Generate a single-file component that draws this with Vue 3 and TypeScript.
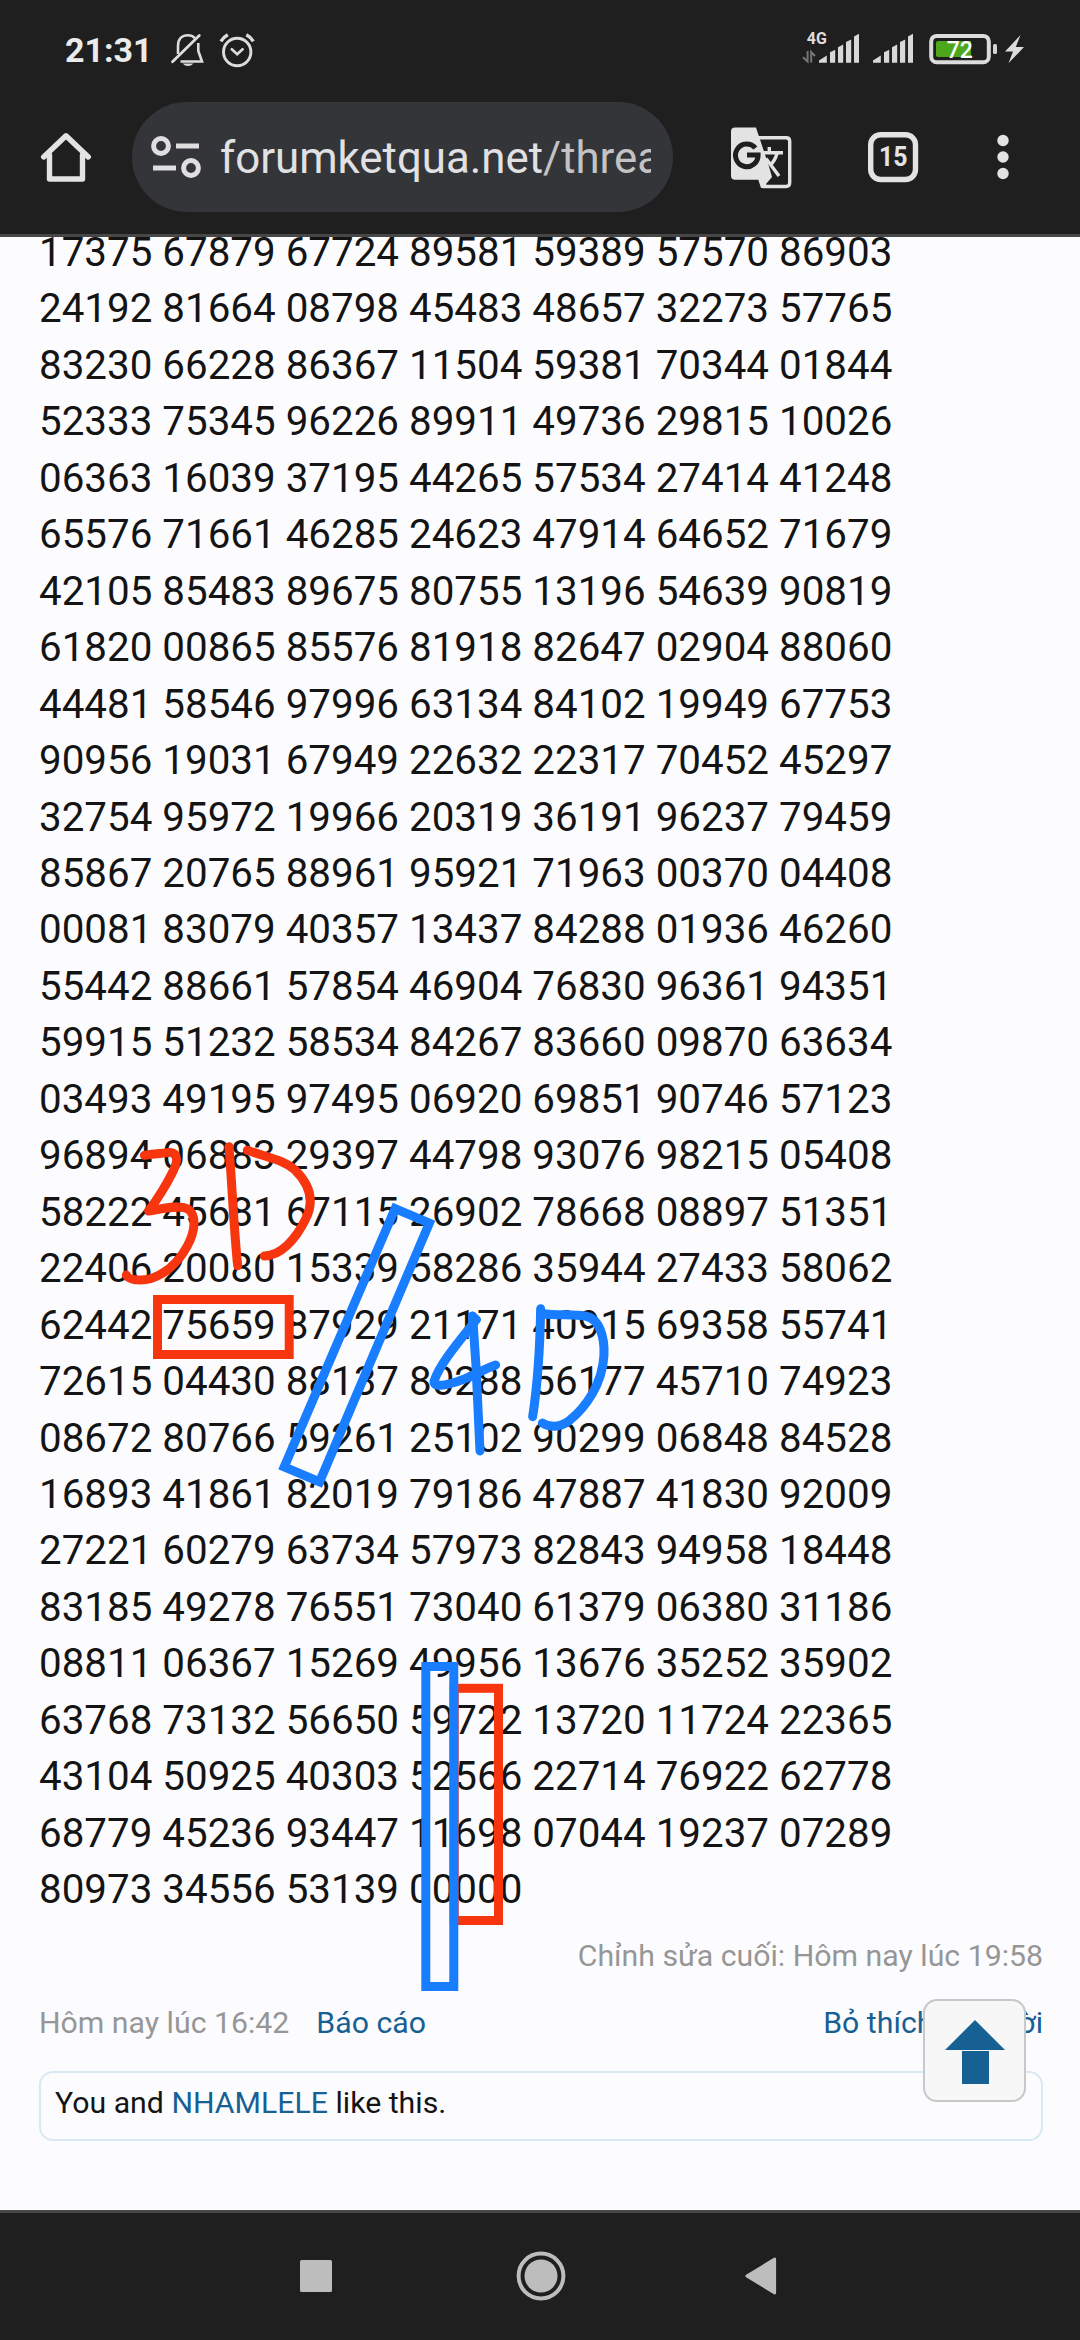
<script setup lang="ts">
const rows: string[] = [
  '17375 67879 67724 89581 59389 57570 86903',
  '24192 81664 08798 45483 48657 32273 57765',
  '83230 66228 86367 11504 59381 70344 01844',
  '52333 75345 96226 89911 49736 29815 10026',
  '06363 16039 37195 44265 57534 27414 41248',
  '65576 71661 46285 24623 47914 64652 71679',
  '42105 85483 89675 80755 13196 54639 90819',
  '61820 00865 85576 81918 82647 02904 88060',
  '44481 58546 97996 63134 84102 19949 67753',
  '90956 19031 67949 22632 22317 70452 45297',
  '32754 95972 19966 20319 36191 96237 79459',
  '85867 20765 88961 95921 71963 00370 04408',
  '00081 83079 40357 13437 84288 01936 46260',
  '55442 88661 57854 46904 76830 96361 94351',
  '59915 51232 58534 84267 83660 09870 63634',
  '03493 49195 97495 06920 69851 90746 57123',
  '96894 06883 29397 44798 93076 98215 05408',
  '58222 45681 67115 26902 78668 08897 51351',
  '22406 20080 15339 58286 35944 27433 58062',
  '62442 75659 87929 21171 40915 69358 55741',
  '72615 04430 88137 80288 56177 45710 74923',
  '08672 80766 59261 25102 90299 06848 84528',
  '16893 41861 82019 79186 47887 41830 92009',
  '27221 60279 63734 57973 82843 94958 18448',
  '83185 49278 76551 73040 61379 06380 31186',
  '08811 06367 15269 49956 13676 35252 35902',
  '63768 73132 56650 59722 13720 11724 22365',
  '43104 50925 40303 52566 22714 76922 62778',
  '68779 45236 93447 11698 07044 19237 07289',
  '80973 34556 53139 00000',
]
const signalOffsets: number[] = [0, 54]
</script>

<template>
  <div class="screen">
    <header class="top">
      <div class="status">
        <span class="clock">21:31</span>
        <svg class="status-left" width="90" height="40" viewBox="168 30 90 40" fill="none" stroke="#dcdcdc">
          <path d="M178 54V46C178 39 182 35.3 188 35.3C191 35.3 193 36.2 194.8 38M198.3 43V51L202 61.5H180.5" stroke-width="2.6" />
          <path d="M172.5 61.7L199.3 35.6" stroke-width="2.8" stroke-linecap="round" />
          <path d="M182.5 63.4H193.5Q191 66 188 66T182.5 63.4Z" fill="#dcdcdc" stroke="none" />
          <circle cx="237.2" cy="52" r="13.7" stroke-width="2.9" />
          <path d="M231.8 49.3L237.2 54.2L242.6 49.3" stroke-width="2.7" stroke-linecap="round" />
          <path d="M220.9 41.3Q223.5 37 227.8 34.7M246.3 34.7Q250.8 37 253.3 41.3" stroke-width="3.4" />
        </svg>
        <svg class="status-right" width="240" height="40" viewBox="800 30 240 40">
          <text x="806.8" y="44" class="net" textLength="20" lengthAdjust="spacingAndGlyphs">4G</text>
          <path d="M807.6 51V61.5L803 57.3M811.2 62.5V52L815 56" fill="none" stroke="#777" stroke-width="2" />
          <g v-for="dx in signalOffsets" :key="dx" :transform="`translate(${dx} 0)`" fill="#d8d8d8">
            <path d="M819 62.7V60.6L826.8 55.6V62.7Z" />
            <path d="M830 62.7V52.3L835.2 49.7V62.7Z" />
            <path d="M838 62.7V47.2L843.2 44.6V62.7Z" />
            <path d="M846 62.7V42L851.2 39.4V62.7Z" />
            <path d="M854 62.7V36.4L859 33.8V62.7Z" />
          </g>
          <rect x="931.2" y="35.9" width="57.6" height="26.3" rx="5.5" fill="none" stroke="#dcdcdc" stroke-width="4" />
          <path d="M938 41H971V57H938Q936 57 936 55V43Q936 41 938 41Z" fill="#4ca71b" />
          <rect x="993" y="44" width="4" height="10" rx="1.5" fill="#d2d2d2" />
          <text x="946.8" y="58.3" class="charge">72</text>
          <path d="M1020.5 35L1005 51.5H1013L1008.5 63.3L1024 47H1015.8Z" fill="#dcdcdc" />
        </svg>
      </div>

      <div class="toolbar">
        <svg class="home" width="54" height="56" viewBox="39 129 54 56" fill="none" stroke="#e3e3e3" stroke-width="5.4" stroke-linejoin="round" stroke-linecap="round">
          <path d="M43.7 157L66 135.8L88.3 157" />
          <path d="M49.5 155V179H82.5V155" />
        </svg>
        <div class="omnibox">
          <svg width="52" height="46" viewBox="150 134 52 46" fill="none" stroke="#dfdfe0" stroke-width="5">
            <circle cx="161" cy="146" r="7.4" />
            <path d="M176 146H199M153 168H176" />
            <circle cx="191" cy="168" r="7.4" />
          </svg>
          <span class="url"><span class="host">forumketqua.net</span>/threads</span>
        </div>
        <svg class="translate" width="64" height="64" viewBox="729 124 64 64">
          <path d="M758 136.8H786Q789.7 136.8 789.7 140.5V181.8Q789.7 185.5 786 185.5H763" fill="none" stroke="#e3e3e3" stroke-width="3.4" />
          <path d="M735 126.5H756L769.3 166.5L772 176L766 183L768 187H761L758.3 178.7H735Q731 178.7 731 174.7V130.5Q731 126.5 735 126.5Z" fill="#e3e3e3" />
          <path d="M762.5 151.8H783M769.3 146V151M777 152.5Q775 160 769.5 165M766 157.5L779 175" fill="none" stroke="#e3e3e3" stroke-width="3.4" />
          <path d="M755.4 147A11.3 11.3 0 1 0 758.1 154H747" fill="none" stroke="#1f1f1f" stroke-width="5" />
        </svg>
        <svg class="tabs" width="54" height="54" viewBox="866 130 54 54">
          <rect x="870.7" y="134.7" width="44.8" height="44.8" rx="10" fill="none" stroke="#e3e3e3" stroke-width="5.4" />
          <text x="879" y="166.3" class="tab-count" textLength="28.5" lengthAdjust="spacingAndGlyphs">15</text>
        </svg>
        <svg class="more" width="16" height="50" viewBox="995 132 16 50" fill="#e3e3e3">
          <circle cx="1003" cy="140.5" r="5.7" />
          <circle cx="1003" cy="157" r="5.7" />
          <circle cx="1003" cy="173.5" r="5.7" />
        </svg>
      </div>
    </header>

    <main class="page">
      <div class="numbers">
        <div v-for="row in rows" :key="row">{{ row }}</div>
      </div>
      <p class="edited">Chỉnh sửa cuối: Hôm nay lúc 19:58</p>
      <div class="meta">
        <span class="date">Hôm nay lúc 16:42</span>
        <a>Báo cáo</a>
        <a class="unlike">Bỏ thích</a>
        <a>Trả lời</a>
      </div>
      <div class="likes">You and <a>NHAMLELE</a> like this.</div>
    </main>

    <nav class="navbar">
      <svg width="32" height="32" viewBox="0 0 32 32"><rect width="32" height="32" rx="1.5" fill="#bdbdbd" /></svg>
      <svg class="circle" width="50" height="50" viewBox="0 0 50 50">
        <circle cx="25" cy="25" r="22.4" fill="none" stroke="#bdbdbd" stroke-width="4" />
        <circle cx="25" cy="25" r="16.5" fill="#bdbdbd" />
      </svg>
      <svg width="32" height="38" viewBox="0 0 32 38"><path d="M1.8 19L29.7 2V36Z" fill="#bdbdbd" stroke="#bdbdbd" stroke-width="2.8" stroke-linejoin="round" /></svg>
    </nav>

    <button class="to-top" type="button" aria-label="Top">
      <svg width="60" height="64" viewBox="0 0 60 64" fill="#176093">
        <path d="M30 0L60 30H0Z" />
        <rect x="17" y="31" width="27" height="33" />
      </svg>
    </button>

    <!-- Pen marks and frames drawn over the post -->
    <svg class="marks" width="1080" height="2340" viewBox="0 0 1080 2340" fill="none" stroke-width="9">
      <g stroke="#f7350e">
        <rect x="157.5" y="1299.5" width="131.7" height="55" />
        <rect x="454.2" y="1688.3" width="44.3" height="232.2" />
        <g transform="translate(0 1120) scale(.33333)" stroke-width="27" stroke-linecap="round" stroke-linejoin="round">
          <path d="M433 106C462 101 481 102 507 97C538 99 534 127 515 162C496 200 472 237 446 273C482 268 538 252 565 268C590 288 586 333 562 378C520 455 455 487 405 479C390 477 382 473 379 465" />
          <path d="M687 80C696 190 701 320 713 437" />
          <path d="M742 91C800 112 850 119 885 150C934 198 942 247 917 297C886 360 842 407 793 408" />
        </g>
      </g>
      <g stroke="#187dff">
        <path d="M395.1 1208.6L429.4 1223.1L319.6 1481.8L284.2 1466.9Z" />
        <rect x="425.8" y="1666.5" width="28" height="320" />
        <g transform="translate(260 1180) scale(.33333)" stroke-width="27" stroke-linecap="round" stroke-linejoin="round">
          <path d="M637 408L649 419C598 483 538 553 522 604C518 630 590 607 616 596C648 582 672 568 707 555" />
          <path d="M638 409L648 558L660 813" />
          <path d="M842 386C840 505 832 618 818 710" />
          <path d="M845 401C895 406 940 403 975 408C1020 415 1034 474 1032 525C1027 615 975 684 929 721C900 743 870 743 847 729" />
        </g>
      </g>
    </svg>
  </div>
</template>

<style>
body {
  margin: 0;
}
</style>

<style scoped>
.screen {
  position: relative;
  display: flex;
  flex-direction: column;
  width: 1080px;
  height: 2340px;
  overflow: hidden;
  background: #fcfcff;
  font-family: Roboto, "Noto Sans", sans-serif;
}
svg {
  display: block;
  flex: none;
}
.top {
  box-sizing: border-box;
  flex: none;
  height: 237px;
  background: #1f1f1f;
  border-bottom: 3px solid #474747;
}
.status {
  display: flex;
  align-items: flex-start;
  height: 72px;
  padding: 30px 40px 0 65px;
  box-sizing: border-box;
}
.clock {
  width: 103px;
  font-size: 34px;
  line-height: 40px;
  font-weight: 700;
  color: #ebebeb;
}
.status-right {
  margin-left: auto;
}
.net {
  font-size: 16.5px;
  font-weight: 700;
  fill: #dedede;
}
.charge {
  font-size: 23px;
  font-weight: 500;
  fill: #fff;
}
.toolbar {
  display: flex;
  align-items: center;
  height: 110px;
  margin-top: 30px;
}
.home {
  margin-left: 39px;
}
.omnibox {
  box-sizing: border-box;
  display: flex;
  align-items: center;
  width: 541px;
  height: 110px;
  margin-left: 39px;
  padding: 0 22px 0 18px;
  border-radius: 55px;
  background: #343539;
}
.url {
  flex: 1;
  margin-left: 18px;
  padding-top: 2px;
  overflow: hidden;
  white-space: nowrap;
  font-size: 43.8px;
  line-height: 56px;
  color: #c3c3c5;
}
.host {
  color: #e1e1e3;
}
.translate {
  margin-left: 56px;
}
.tabs {
  margin-left: 73px;
}
.tab-count {
  font-size: 27px;
  font-weight: 700;
  fill: #e3e3e3;
}
.more {
  margin-left: 75px;
}
.page {
  flex: 1;
  min-height: 0;
  overflow: hidden;
  padding: 0 37px 0 39px;
  font-size: 30.25px;
  line-height: 36px;
  color: #141414;
}
.numbers {
  margin-top: -12px;
  font-size: 40.33px;
  line-height: 56.46px;
}
.edited {
  margin: 19px 0 0;
  text-align: right;
  color: #969696;
}
.meta {
  display: flex;
  gap: 27px;
  margin-top: 31px;
}
.date {
  color: #969696;
}
.unlike {
  margin-left: auto;
}
.page a {
  color: #176093;
}
.likes {
  box-sizing: border-box;
  height: 70px;
  margin-top: 30px;
  padding: 12px 14px 0;
  border: 2px solid #d9e9f2;
  border-radius: 14px;
}
.navbar {
  box-sizing: border-box;
  flex: none;
  display: flex;
  justify-content: space-between;
  align-items: center;
  height: 130px;
  padding: 0 303px 2px 300px;
  background: #1f1f1f;
  border-top: 3px solid #474747;
}
.circle {
  margin-left: 4px;
}
.to-top {
  position: absolute;
  left: 923px;
  top: 1999px;
  box-sizing: border-box;
  display: flex;
  justify-content: center;
  width: 103px;
  height: 103px;
  padding: 19px 0 0;
  border: 2px solid #c8c8c8;
  border-radius: 14px;
  background: #f7f7f7;
}
.marks {
  position: absolute;
  left: 0;
  top: 0;
  pointer-events: none;
}
</style>
